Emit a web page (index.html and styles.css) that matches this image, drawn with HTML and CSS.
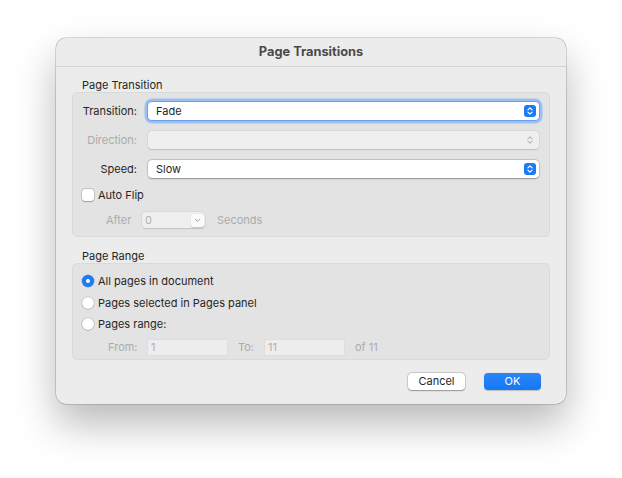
FILE: index.html
```html
<!DOCTYPE html>
<html>
<head>
<meta charset="utf-8">
<link rel="stylesheet" href="styles.css">
</head>
<body>
<div class="stage">
  <div class="dialog">
    <div class="titlebar">Page Transitions</div>
    <div class="content">
      <div class="section-label">Page Transition</div>
      <div class="group group-transition">
        <div class="row">
          <div class="label">Transition:</div>
          <div class="popup focused">
            <span class="popup-text">Fade</span>
            <svg class="stepper" width="12" height="12" viewBox="0 0 12 12"><rect x="0" y="0" width="12" height="12" rx="3" fill="#1a7cf5"/><path d="M3.9 4.9 L6 2.9 L8.1 4.9 M3.9 7.1 L6 9.1 L8.1 7.1" fill="none" stroke="#fff" stroke-width="1.2" stroke-linecap="round" stroke-linejoin="round"/></svg>
          </div>
        </div>
        <div class="row">
          <div class="label disabled">Direction:</div>
          <div class="popup popup-disabled">
            <span class="popup-text"></span>
            <svg class="stepper" width="12" height="12" viewBox="0 0 12 12"><path d="M3.9 4.9 L6 2.9 L8.1 4.9 M3.9 7.1 L6 9.1 L8.1 7.1" fill="none" stroke="#b8b8b8" stroke-width="1.1" stroke-linecap="round" stroke-linejoin="round"/></svg>
          </div>
        </div>
        <div class="row">
          <div class="label">Speed:</div>
          <div class="popup">
            <span class="popup-text">Slow</span>
            <svg class="stepper" width="12" height="12" viewBox="0 0 12 12"><rect x="0" y="0" width="12" height="12" rx="3" fill="#1a7cf5"/><path d="M3.9 4.9 L6 2.9 L8.1 4.9 M3.9 7.1 L6 9.1 L8.1 7.1" fill="none" stroke="#fff" stroke-width="1.2" stroke-linecap="round" stroke-linejoin="round"/></svg>
          </div>
        </div>
        <div class="check-row">
          <span class="checkbox"></span>
          <span class="check-text">Auto Flip</span>
        </div>
        <div class="after-row">
          <span class="after-label disabled">After</span>
          <div class="combo">
            <span class="combo-text">0</span>
            <span class="combo-btn"><svg width="7" height="5" viewBox="0 0 7 5"><path d="M1.5 1.5 L3.5 3.3 L5.5 1.5" fill="none" stroke="#9a9a9a" stroke-width="1" stroke-linecap="round" stroke-linejoin="round"/></svg></span>
          </div>
          <span class="seconds disabled">Seconds</span>
        </div>
      </div>

      <div class="section-label second">Page Range</div>
      <div class="group group-range">
        <div class="radio-row">
          <span class="radio on"></span>
          <span class="radio-text">All pages in document</span>
        </div>
        <div class="radio-row">
          <span class="radio"></span>
          <span class="radio-text">Pages selected in Pages panel</span>
        </div>
        <div class="radio-row">
          <span class="radio"></span>
          <span class="radio-text">Pages range:</span>
        </div>
        <div class="from-row">
          <span class="from-label disabled">From:</span>
          <div class="field">1</div>
          <span class="to-label disabled">To:</span>
          <div class="field">11</div>
          <span class="of-label disabled">of 11</span>
        </div>
      </div>

      <div class="buttons">
        <div class="btn cancel">Cancel</div>
        <div class="btn ok">OK</div>
      </div>
    </div>
  </div>
</div>
</body>
</html>
```

FILE: styles.css
```css
html, body {
  margin: 0;
  padding: 0;
  background: #ffffff;
}

body {
  font-family: "Inter", "Liberation Sans", sans-serif;
  font-size: 11px;
  color: #262626;
}

.stage {
  height: 478px;
  box-sizing: border-box;
  padding-top: 38px;
  padding-left: 56px;
}

.dialog {
  width: 510px;
  height: 366px;
  box-sizing: border-box;
  background: #ececec;
  border-radius: 10px;
  box-shadow: 0 0 0 0.5px rgba(0, 0, 0, 0.28), 0 20px 40px rgba(0, 0, 0, 0.28);
  overflow: hidden;
}

.titlebar {
  height: 28px;
  line-height: 28px;
  text-align: center;
  font-weight: 700;
  font-size: 12.8px;
  color: #4a4a4a;
  border-bottom: 1px solid #d3d3d3;
}

.content {
  padding: 0 16px;
}

.section-label {
  margin-top: 11px;
  height: 14px;
  line-height: 14px;
  padding-left: 10px;
  color: #262626;
}

.section-label.second {
  margin-top: 12px;
}

.group {
  background: #e3e3e3;
  border: 1px solid #dadada;
  border-radius: 5px;
  box-sizing: border-box;
}

.group-transition {
  height: 145px;
  padding: 9px 10px 0 0;
}

.row {
  display: flex;
  align-items: center;
  height: 18px;
  margin-bottom: 11px;
}

.label {
  width: 64px;
  text-align: right;
  margin-right: 11px;
  color: #262626;
}

.disabled {
  color: #ababab;
}

.label.disabled {
  color: #ababab;
}

.popup {
  flex: 1;
  height: 18px;
  box-sizing: border-box;
  background: #ffffff;
  border-radius: 4px;
  box-shadow: 0 0 0 0.5px rgba(0, 0, 0, 0.18), 0 0.5px 1.5px rgba(0, 0, 0, 0.3);
  display: flex;
  align-items: center;
  padding: 0 3px 0 8px;
}

.popup.focused {
  box-shadow: 0 0 0 1px #6d9fe8, 0 0 0 3.5px #9dc0f2;
}

.popup-disabled {
  background: #efefef;
  box-shadow: 0 0 0 0.5px rgba(0, 0, 0, 0.08), 0 0.5px 1px rgba(0, 0, 0, 0.12);
}

.popup-text {
  flex: 1;
  color: #1f1f1f;
}

.stepper {
  display: block;
}

.check-row {
  display: flex;
  align-items: center;
  height: 14px;
  margin-top: -1px;
  padding-left: 9px;
}

.checkbox {
  width: 12px;
  height: 12px;
  box-sizing: border-box;
  background: #ffffff;
  border-radius: 3px;
  box-shadow: 0 0 0 0.5px rgba(0, 0, 0, 0.25), 0 0.5px 1px rgba(0, 0, 0, 0.2);
  margin-right: 4px;
}

.after-row {
  display: flex;
  align-items: center;
  height: 16px;
  margin-top: 10px;
  padding-left: 33px;
}

.after-label {
  width: 36px;
}

.combo {
  width: 63px;
  height: 16px;
  box-sizing: border-box;
  background: #efefef;
  border-radius: 4px;
  box-shadow: 0 0 0 0.5px rgba(0, 0, 0, 0.08), 0 0.5px 1px rgba(0, 0, 0, 0.1);
  display: flex;
  align-items: center;
  padding: 0 1px 0 3px;
  margin-right: 12px;
}

.combo-text {
  flex: 1;
  color: #b0b0b0;
}

.combo-btn {
  width: 13px;
  height: 13px;
  background: #fbfbfb;
  border-radius: 3px;
  box-shadow: 0 0.5px 1px rgba(0, 0, 0, 0.18);
  display: flex;
  align-items: center;
  justify-content: center;
}

.group-range {
  height: 97px;
  padding: 10px 0 0 9px;
}

.radio-row {
  display: flex;
  align-items: center;
  height: 14px;
  margin-bottom: 7.5px;
}

.radio {
  width: 12px;
  height: 12px;
  box-sizing: border-box;
  border-radius: 50%;
  background: #ffffff;
  box-shadow: 0 0 0 0.5px rgba(0, 0, 0, 0.22), 0 0.5px 1px rgba(0, 0, 0, 0.2);
  margin-right: 4px;
  position: relative;
}

.radio.on {
  background: #1a7cf5;
  box-shadow: 0 0 0 0.5px rgba(0, 60, 160, 0.4);
}

.radio.on::after {
  content: "";
  position: absolute;
  left: 4px;
  top: 4px;
  width: 4px;
  height: 4px;
  border-radius: 50%;
  background: #ffffff;
}

.from-row {
  display: flex;
  align-items: center;
  height: 17px;
  margin-top: 1px;
  padding-left: 26px;
}

.field {
  height: 17px;
  box-sizing: border-box;
  width: 81px;
  background: #ededed;
  border: 1px solid #dedede;
  color: #b0b0b0;
  line-height: 15px;
  padding-left: 3px;
}

.from-label {
  width: 39px;
}

.to-label {
  width: 26px;
  margin-left: 10px;
}

.of-label {
  margin-left: 10px;
}

.buttons {
  display: flex;
  justify-content: flex-end;
  gap: 19px;
  margin-top: 13px;
  padding-right: 9px;
}

.btn {
  width: 57px;
  height: 17px;
  line-height: 17px;
  text-align: center;
  border-radius: 4px;
  box-sizing: border-box;
}

.cancel {
  background: #ffffff;
  color: #262626;
  box-shadow: 0 0 0 0.5px rgba(0, 0, 0, 0.2), 0 0.5px 1.5px rgba(0, 0, 0, 0.3);
}

.ok {
  background: linear-gradient(#2a86f7, #1478f5);
  color: #ffffff;
  box-shadow: 0 0.5px 1px rgba(0, 0, 0, 0.2);
}
```
